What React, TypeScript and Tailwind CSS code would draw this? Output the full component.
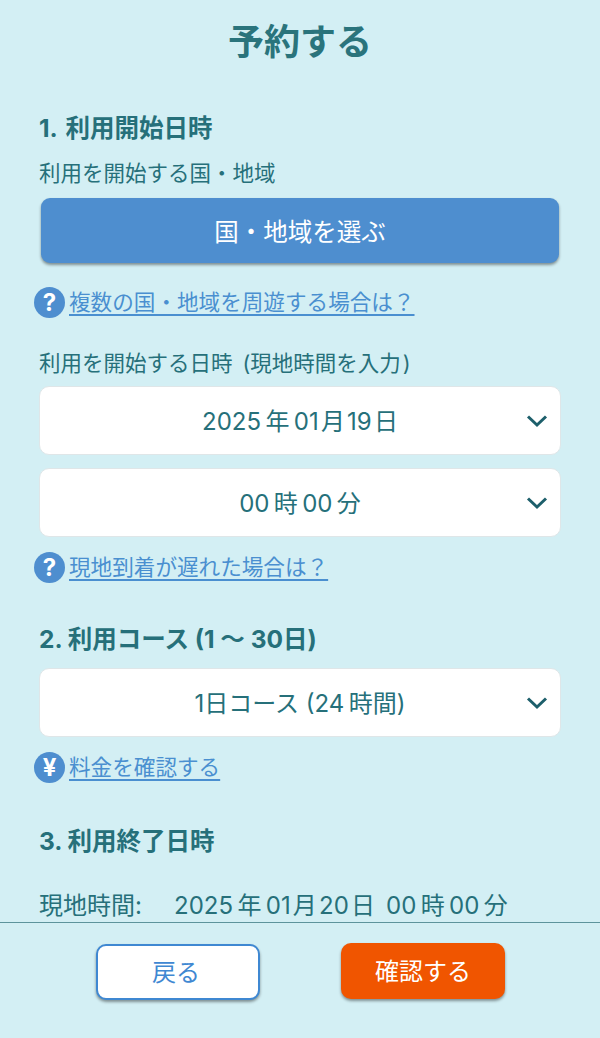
import { ReactNode } from "react";

function Chevron() {
  return (
    <svg className="absolute right-[12px] top-1/2 -translate-y-1/2" width="22" height="14" viewBox="0 0 22 14" fill="none">
      <path d="M2 2.5 L11 11 L20 2.5" stroke="#1d5f6b" strokeWidth="3" />
    </svg>
  );
}

function Select({ children, className = "" }: { children: ReactNode; className?: string }) {
  return (
    <div className={`relative h-[69px] rounded-[10px] border border-[#dfe6e8] bg-white flex items-center justify-center text-[24px] text-[#26707a] ${className}`}>
      <span className="translate-y-[1px]">{children}</span>
      <Chevron />
    </div>
  );
}

function HelpLink({ mark, text, className = "" }: { mark: string; text: string; className?: string }) {
  return (
    <div className={`flex items-center h-[31px] -ml-[5px] ${className}`}>
      <span className="w-[31px] h-[31px] rounded-full bg-[#4e8ecf] text-white font-bold text-[24px] leading-none flex items-center justify-center shrink-0">
        {mark}
      </span>
      <a className="ml-[4px] text-[21.6px] leading-[29px] text-[#4a8fd0] underline underline-offset-[4px] decoration-[1.5px]">{text}</a>
    </div>
  );
}

export default function App() {
  return (
    <div className="h-[1038px] w-[600px] flex flex-col overflow-hidden bg-[#d3eff4] text-[#26707a] font-['Inter','Noto_Sans_CJK_JP',sans-serif]">
      <main className="flex-1 min-h-0 overflow-hidden px-[39px]">
        <h1 className="mt-[16px] text-center text-[36px] leading-[52px] font-bold text-[#2a747c]">予約する</h1>

        <h2 className="mt-[43px] text-[24.5px] leading-[34px] font-bold">1.{"\u200a"} 利用開始日時</h2>
        <p className="mt-[12px] text-[21.5px] leading-[32px]">利用を開始する国・地域</p>
        <button className="mt-[9px] ml-[2px] block w-[518px] h-[65px] rounded-[9px] bg-[#4e8ecf] text-white text-[24.5px] pt-[4px] shadow-[0_2px_3px_rgba(0,0,0,0.4)]">
          国・地域を選ぶ
        </button>
        <HelpLink mark="?" text="複数の国・地域を周遊する場合は？" className="mt-[24px]" />

        <p className="mt-[29px] text-[21.5px] leading-[32px]">利用を開始する日時{"\u2009"} (現地時間を入力{"\u200a"})</p>
        <Select className="mt-[7px]">2025{"\u2009"}年{"\u2009"}01{"\u200a"}月{"\u200a"}19{"\u200a"}日</Select>
        <Select className="mt-[13px]">00{"\u2009"}時{"\u2009"}00{"\u2009"}分</Select>
        <HelpLink mark="?" text="現地到着が遅れた場合は？" className="mt-[15px]" />

        <h2 className="mt-[39px] text-[24.5px] leading-[34px] font-bold">2. 利用コース (1 ～ 30日)</h2>
        <Select className="mt-[12px]">1日コース (24{"\u2009"}時間)</Select>
        <HelpLink mark="¥" text="料金を確認する" className="mt-[15px]" />

        <h2 className="mt-[41px] text-[24.5px] leading-[34px] font-bold">3. 利用終了日時</h2>
        <p className="mt-[33px] flex text-[24px] leading-[30px]">
          <span className="w-[135px]">現地時間:</span>
          <span>2025{"\u2009"}年{"\u2009"}01{"\u200a"}月{"\u200a"}20{"\u200a"}日 {"\u2009"}00{"\u2009"}時{"\u2009"}00{"\u2009"}分</span>
        </p>
      </main>

      <footer className="h-[116px] shrink-0 border-t-[1.5px] border-[#5d949c] flex justify-between pl-[96px] pr-[95px] pt-[20px]">
        <button className="w-[164px] h-[56px] rounded-[10px] border-[2px] border-[#3f88d2] bg-white text-[#3f88d2] text-[24px] pt-[2px] pr-[4px] shadow-[0_2px_3px_rgba(0,0,0,0.4)] mt-[1px]">
          戻る
        </button>
        <button className="w-[164px] h-[56px] rounded-[10px] bg-[#f05500] text-white text-[24px] pt-[2px] shadow-[0_2px_3px_rgba(0,0,0,0.4)]">
          確認する
        </button>
      </footer>
    </div>
  );
}
